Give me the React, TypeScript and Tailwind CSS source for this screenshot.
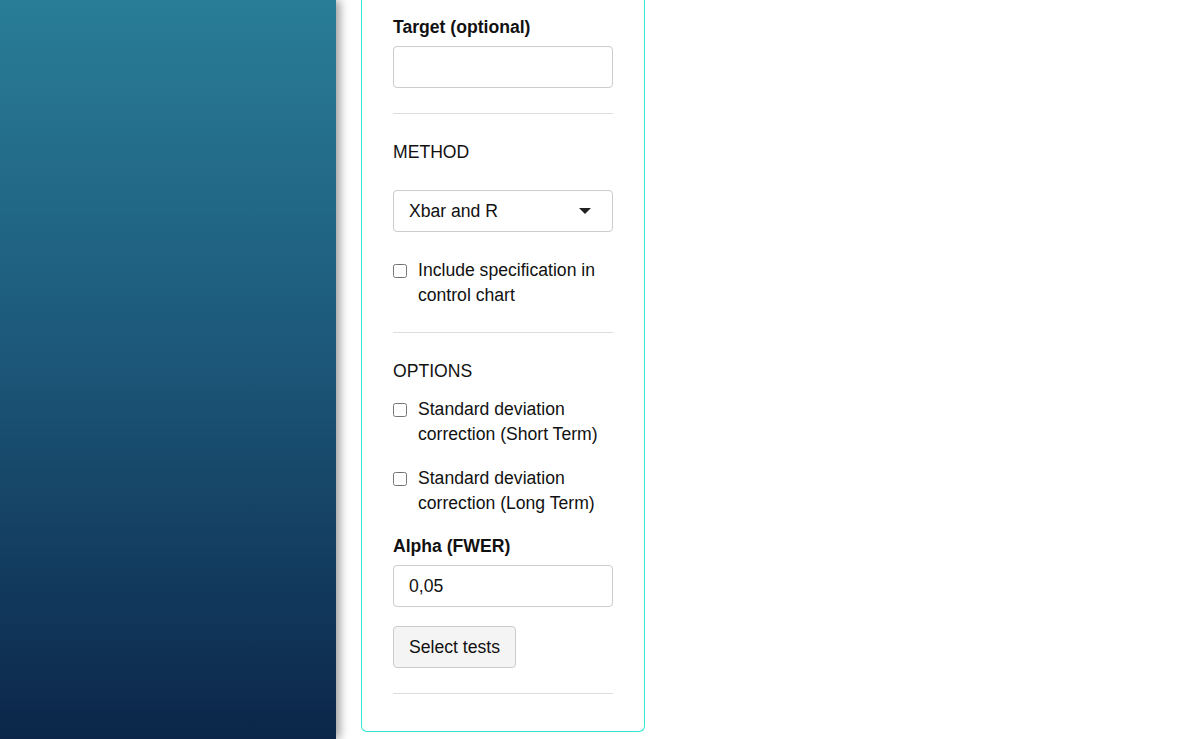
import React, { useState } from 'react';

const font = { fontFamily: '"Liberation Sans", Arial, sans-serif' };

const Divider: React.FC<{ className?: string }> = ({ className }) => (
    <div className={`h-px w-full bg-[#dddddd] ${className ?? ''}`} />
);

const CheckRow: React.FC<{ label: string; className?: string }> = ({
    label,
    className,
}) => {
    const [checked, setChecked] = useState(false);
    return (
        <label className={`flex items-start gap-[11px] ${className ?? ''}`}>
            <input
                type="checkbox"
                checked={checked}
                onChange={(event) => setChecked(event.target.checked)}
                className="mt-[6px] h-[14px] w-[14px] shrink-0 accent-[#0b6fd8]"
            />
            <span>{label}</span>
        </label>
    );
};

export default function App() {
    const [target, setTarget] = useState('');
    const [alpha, setAlpha] = useState('0,05');

    return (
        <div
            className="flex h-[739px] w-[1195px] overflow-hidden bg-white text-[17.6px] leading-[25px] text-[#111]"
            style={font}
        >
            <aside className="relative z-10 h-full w-[336px] shrink-0 bg-[linear-gradient(180deg,#297d97_0%,#1d5a7c_45%,#0b2649_100%)] shadow-[4px_0_9px_rgba(0,0,0,0.38)]" />
            <div className="ml-[25px] flex flex-col">
                <div className="w-[284px] rounded-b-[6px] border border-t-0 border-[#2ee8d2] px-[31px] pb-[37px] pt-[15px]">
                    <div className="font-bold">Target (optional)</div>
                    <input
                        value={target}
                        onChange={(event) => setTarget(event.target.value)}
                        className="mt-[6px] h-[42px] w-full rounded-[4px] border border-[#cccccc] px-[15px] outline-none"
                    />
                    <Divider className="mt-[25px]" />

                    <div className="mt-[26px]">METHOD</div>
                    <div className="mt-[25px] flex h-[42px] w-full items-center justify-between rounded-[4px] border border-[#cccccc] pl-[15px] pr-[21px]">
                        <span>Xbar and R</span>
                        <svg width="12" height="6" viewBox="0 0 12 6">
                            <path d="M0 0h12L6 6z" fill="#222" />
                        </svg>
                    </div>
                    <CheckRow
                        label="Include specification in control chart"
                        className="mt-[26px]"
                    />
                    <Divider className="mt-[24px]" />

                    <div className="mt-[26px]">OPTIONS</div>
                    <CheckRow
                        label="Standard deviation correction (Short Term)"
                        className="mt-[13px]"
                    />
                    <CheckRow
                        label="Standard deviation correction (Long Term)"
                        className="mt-[19px]"
                    />

                    <div className="mt-[18px] font-bold">Alpha (FWER)</div>
                    <input
                        value={alpha}
                        onChange={(event) => setAlpha(event.target.value)}
                        className="mt-[6px] h-[42px] w-full rounded-[4px] border border-[#cccccc] px-[15px] outline-none"
                    />
                    <button
                        type="button"
                        className="mt-[19px] h-[42px] rounded-[4px] border border-[#cccccc] bg-[#f4f4f4] px-[15px]"
                    >
                        Select tests
                    </button>
                    <Divider className="mt-[25px]" />
                </div>
            </div>
        </div>
    );
}
